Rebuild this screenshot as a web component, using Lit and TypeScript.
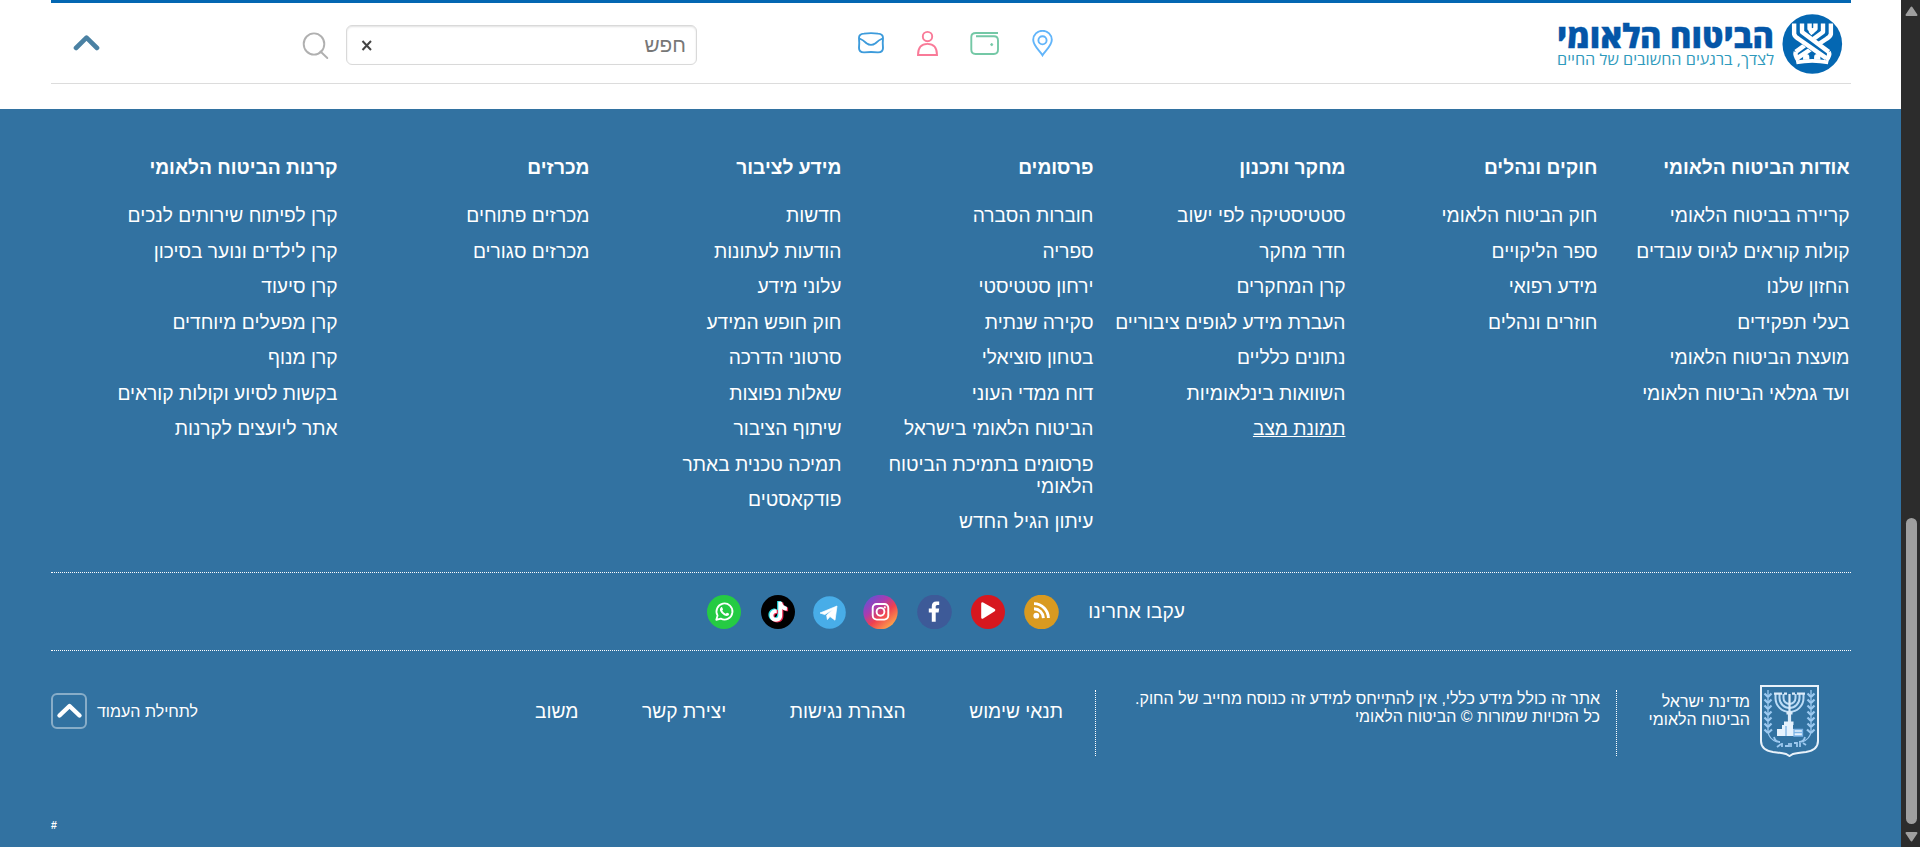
import { LitElement, html, css, svg } from 'lit';
import { customElement } from 'lit/decorators.js';
import { classMap } from 'lit/directives/class-map.js';

interface Column { title: string; links: string[]; underlined?: string; }

const COLUMNS: Column[] = [
  { title: 'אודות הביטוח הלאומי', links: ['קריירה בביטוח הלאומי', 'קולות קוראים לגיוס עובדים', 'החזון שלנו', 'בעלי תפקידים', 'מועצת הביטוח הלאומי', 'ועד גמלאי הביטוח הלאומי'] },
  { title: 'חוקים ונהלים', links: ['חוק הביטוח הלאומי', 'ספר הליקויים', 'מידע רפואי', 'חוזרים ונהלים'] },
  { title: 'מחקר ותכנון', links: ['סטטיסטיקה לפי ישוב', 'חדר מחקר', 'קרן המחקרים', 'העברת מידע לגופים ציבוריים', 'נתונים כלליים', 'השוואות בינלאומיות', 'תמונת מצב'], underlined: 'תמונת מצב' },
  { title: 'פרסומים', links: ['חוברות הסברה', 'ספריה', 'ירחון סטטיסטי', 'סקירה שנתית', 'בטחון סוציאלי', 'דוח ממדי העוני', 'הביטוח הלאומי בישראל', 'פרסומים בתמיכת הביטוח הלאומי', 'עיתון הגיל החדש'] },
  { title: 'מידע לציבור', links: ['חדשות', 'הודעות לעתונות', 'עלוני מידע', 'חוק חופש המידע', 'סרטוני הדרכה', 'שאלות נפוצות', 'שיתוף הציבור', 'תמיכה טכנית באתר', 'פודקאסטים'] },
  { title: 'מכרזים', links: ['מכרזים פתוחים', 'מכרזים סגורים'] },
  { title: 'קרנות הביטוח הלאומי', links: ['קרן לפיתוח שירותים לנכים', 'קרן לילדים ונוער בסיכון', 'קרן סיעוד', 'קרן מפעלים מיוחדים', 'קרן מנוף', 'בקשות לסיוע וקולות קוראים', 'אתר ליועצים לקרנות'] },
];

const LEGAL = ['תנאי שימוש', 'הצהרת נגישות', 'יצירת קשר', 'משוב'];

const rss = svg`<circle cx="17.5" cy="17" r="17.3" fill="#d99a20"/><circle cx="12.3" cy="20.7" r="2.9" fill="#fff"/>
  <path d="M10 13.7a9.6 9.6 0 0 1 9.4 9.4M10 8.6a14.6 14.6 0 0 1 14.4 14.5" fill="none" stroke="#fff" stroke-width="2.9"/>`;
const youtube = svg`<circle cx="17" cy="17" r="17" fill="#d7171f"/><path d="M11.5 8.5 23 15.2 11.5 22.5Z" fill="#fff" stroke="#fff" stroke-width="2.6" stroke-linejoin="round"/>`;
const facebook = svg`<circle cx="17.5" cy="17" r="17.3" fill="#3d5a98"/><path d="M14.8 26.8v-9.4h-3v-4h3v-2.1c0-3.4 1.6-4.9 4.6-4.9.9 0 2 .1 2.8.2v3.4h-1.8c-1.3 0-1.7.7-1.7 1.8v1.6h3.5l-.6 4h-2.9v9.4Z" fill="#fff"/>`;
const instagram = svg`<defs><linearGradient id="ig" x1="0.15" y1="0.1" x2="0.85" y2="0.95">
  <stop offset="0" stop-color="#6c4fd0"/><stop offset=".3" stop-color="#a93cb0"/><stop offset=".58" stop-color="#f0414f"/><stop offset="1" stop-color="#ffb04a"/></linearGradient></defs>
  <circle cx="17.5" cy="17" r="17.2" fill="url(#ig)"/><rect x="9.7" y="9" width="15.6" height="15.6" rx="4" fill="none" stroke="#fff" stroke-width="1.9"/>
  <circle cx="17.5" cy="16.8" r="3.9" fill="none" stroke="#fff" stroke-width="1.9"/><circle cx="21.8" cy="12.4" r="1.1" fill="#fff"/>`;
const telegram = svg`<circle cx="16.5" cy="16.5" r="16.3" fill="#48ade8"/><path d="M7 17 24 10 22 24.2 17 20.6 14.4 23.6 13.6 19.3 20 13.5 11.8 18.6Z" fill="#fff" stroke="#fff" stroke-width=".7" stroke-linejoin="round"/>`;
const note = 'M17.3 6.8h3.8c.2 2.9 2 4.8 4.8 5v3.7c-1.8 0-3.4-.5-4.7-1.5v6.3c0 4-2.7 6.4-6.2 6.4-3.6 0-6.4-2.6-6.4-6.2 0-3.8 3.1-6.6 7.1-6.3v3.9c-1.9-.4-3.3.7-3.3 2.3 0 1.5 1.1 2.5 2.6 2.5 1.6 0 2.3-1 2.3-2.7Z';
const tiktok = svg`<circle cx="17" cy="17" r="17" fill="#000"/><path d=${note} fill="#25d8de" transform="translate(-1.2 -.8)"/><path d=${note} fill="#f0264f" transform="translate(1.2 .8)"/><path d=${note} fill="#fff"/>`;
const whatsapp = svg`<circle cx="17" cy="17" r="17" fill="#25cb43"/><path d="M9.3 24.8 10.6 20.6a8 8 0 1 1 3.2 3Z" fill="none" stroke="#fff" stroke-width="1.8" stroke-linejoin="round"/>
  <path d="M13.9 12.4c.5-.5 1.3-.3 1.5.3l.6 1.5c.1.4-.8 1.4-.7 1.6.8 1.4 1.9 2.4 3.3 3 .3.1 1.1-1.2 1.5-1.1l1.7.8c.5.4.2 1.5-.5 2-1.1.8-2.6.5-4.2-.3a9 9 0 0 1-3.9-4.3c-.5-1.4-.2-2.7.7-3.5Z" fill="#fff"/>`;
const SOCIAL = [
  { name: 'rss', width: 35, icon: rss },
  { name: 'youtube', width: 34, icon: youtube },
  { name: 'facebook', width: 35, icon: facebook },
  { name: 'instagram', width: 35, icon: instagram },
  { name: 'telegram', width: 33, icon: telegram },
  { name: 'tiktok', width: 34, icon: tiktok },
  { name: 'whatsapp', width: 34, icon: whatsapp },
];

@customElement('site-header')
class SiteHeader extends LitElement {
  static styles = css`
    :host { display: block; height: 109px; background: #fff; }
    .bar { box-sizing: border-box; height: 84px; margin: 0 50px 0 51px; border-top: 3px solid #0467b2; border-bottom: 1px solid #dcdcdc;
      display: flex; align-items: flex-start; padding-right: 8px; }
    svg { display: block; flex: none; }
    .logo { margin-top: 11px; direction: ltr; }
    .mark { font: 800 33px "Open Sans", sans-serif; fill: #0456a8; direction: ltr; stroke: #0456a8; stroke-width: .3px; }
    .slogan { font: 400 15px "Open Sans", sans-serif; fill: #2f9abc; direction: ltr; }
    .tools { flex: none; display: flex; justify-content: space-between; width: 195px; margin: 27px 503px 0 0; }
    .field { box-sizing: border-box; flex: none; width: 351px; height: 40px; margin: 22px 161px 0 0; border: 1px solid #d9d9d9; border-radius: 6px;
      box-shadow: inset 0 1px 2px rgba(0,0,0,.12); display: flex; align-items: center; justify-content: space-between; padding: 0 10px 0 14px;
      font: 20.8px "Liberation Sans", Arial, sans-serif; color: #777; }
    .glass { margin: 29px 17px 0 0; }
    .up { margin: 31px 202px 0 0; }
  `;
  render() {
    return html`<div class="bar">
      <svg class="logo" width="287" height="62" viewBox="0 0 287 62">
        <circle cx="256.3" cy="30" r="29.8" fill="#0467b2"/>
        <g transform="translate(256.3 30) scale(1.05) translate(-256.3 -30)">
          <g fill="none" stroke-linejoin="round">
            <g stroke="#fff" stroke-width="4.2">
              <path d="M274 10.5V20.5Q273.5 23 270 25L242 43.5M266.5 10.5V18.5L240.5 37.5M259.3 10.5V15.5L254 20"/>
              <path d="M240.5 37.5Q239.5 41 243 45.5M272 37.5Q273.5 41 269.5 45.5"/>
            </g>
            <path d="M248 24.5 269 40" stroke="#0467b2" stroke-width="11"/>
            <g stroke="#fff" stroke-width="4.2"><path d="M239 10.5V20.5Q239.5 23 243 25L269.5 43.5M246.5 10.5V18.5L272 37.5M253.7 10.5V15.5L258 19"/></g>
            <path d="M241 47.5Q256.3 44.5 271.5 47.5" stroke="#fff" stroke-width="3.6"/>
          </g>
          <path d="M247.5 45v-2.5a3 3 0 0 1 6 0V45zM258 45v-2.5a3 3 0 0 1 6 0V45z" fill="#fff"/>
        </g>
        <text class="mark" x="1" y="33.5" textLength="217" lengthAdjust="spacingAndGlyphs">הביטוח הלאומי</text>
        <text class="slogan" x="1" y="51" textLength="217" lengthAdjust="spacingAndGlyphs">לצדך, ברגעים החשובים של החיים</text>
      </svg>
      <div class="tools">
        <svg width="21" height="27" viewBox="0 0 21 27" fill="none" stroke="#62b5fa" stroke-width="1.9"><path d="M10.5 25.3C8 21 1.2 16 1.2 9.8a9.3 9 0 0 1 18.6 0C19.8 16 13 21 10.5 25.3Z"/><circle cx="10.5" cy="10.3" r="4.1"/></svg>
        <svg width="29" height="25" viewBox="0 0 29 25" fill="none" stroke="#74c8a6" stroke-width="1.9"><path d="M28 3H6Q1.3 3 1.3 7v12.5Q1.3 24 5.5 24h18.3Q28 24 28 19.5v-9Q28 6.3 24 6.3H6"/><circle cx="21.7" cy="14.6" r="1" fill="#74c8a6" stroke-width="1"/></svg>
        <svg width="21" height="27" viewBox="0 0 21 27" fill="none" stroke="#f97a98" stroke-width="1.9"><circle cx="10.5" cy="6.6" r="4.7"/><path d="M1 25C1 17.7 4 13.9 10.5 13.9S20 17.7 20 25Z"/></svg>
        <svg width="26" height="25" viewBox="0 0 26 25" fill="none" stroke="#3d9bdb" stroke-width="1.9"><path d="M6 3.6Q13 2.6 20 3.6 25 3.7 25 8q-.5 5 0 10 0 4.3-5 4.4-7-.7-14 0-5-.1-5-4.4.5-5 0-10Q1 3.7 6 3.6ZM1.5 8.5Q5 10 8.5 13.2 13 16.5 17.5 13.2 21 10 24.5 8.5"/></svg>
      </div>
      <div class="field"><span>חפש</span><svg width="12" height="12" viewBox="0 0 12 12" stroke="#444" stroke-width="2"><path d="m1.5 2 8.5 9M10 2 1.5 11"/></svg></div>
      <svg class="glass" width="27" height="28" viewBox="0 0 27 28" fill="none" stroke="#b0b0b0" stroke-width="1.9" stroke-linecap="round"><ellipse cx="12" cy="12" rx="10.3" ry="10.6"/><path d="m18.5 19.5 6.8 6.5"/></svg>
      <svg class="up" width="27" height="17" viewBox="0 0 27 17" fill="none" stroke="#4a81a3" stroke-width="4.6" stroke-linecap="round" stroke-linejoin="round"><path d="M3 14 13.5 3.7 24 14"/></svg>
    </div>`;
  }
}

@customElement('site-footer')
class SiteFooter extends LitElement {
  static styles = css`
    :host { display: block; box-sizing: border-box; height: 738px; padding: 48px 50px 0 51px; background: #3272a1; color: #fff; font: 19.2px/22px "Liberation Sans", Arial, sans-serif; }
    svg { display: block; flex: none; }
    .columns { display: grid; grid-template-columns: repeat(7, 252px); height: 415px; padding-right: 1.5px; width: 1798px; box-sizing: border-box; }
    .column { box-sizing: border-box; width: 252px; padding-left: 44px; }
    .title { font-size: 19.2px; font-weight: 700; margin: 0 0 26.45px; line-height: 22px; white-space: nowrap; }
    .link { margin-bottom: 13.45px; }
    .link.short { white-space: nowrap; }
    .underlined { text-decoration: underline; }
    .social { box-sizing: border-box; height: 79px; border: dotted #fff; border-width: 1px 0; display: flex; align-items: center; padding-right: 666px; padding-top: 1px; }
    .follow { margin-left: 29px; }
    .icons { display: flex; align-items: center; gap: 19px; }
    .telegram { margin-right: -2px; }
    .tiktok { margin-right: -1px; }
    .whatsapp { margin-right: 1px; }
    .bottom { display: flex; align-items: flex-start; padding-top: 34px; font-size: 16px; line-height: 18px; }
    .emblem { margin-right: 32px; }
    .state { margin: 8px 10px 0 0; width: 133px; }
    .about { box-sizing: border-box; width: 522px; height: 66px; margin-top: 5px; padding-right: 16px; border: dotted #fff; border-width: 0 1px; white-space: nowrap; }
    .legal { display: flex; gap: 63.5px; margin: 16px 32px 0 0; font-size: 19.2px; line-height: 22px; white-space: nowrap; }
    .top { flex: none; display: flex; align-items: center; gap: 10px; margin-top: 8px; margin-right: auto; }
    .label { padding-top: 2px; }
    .box { box-sizing: border-box; width: 36px; height: 36px; border: 2px solid rgba(255,255,255,.42); border-radius: 6px; display: grid; place-items: center; }
    .hash { text-align: left; font-size: 10.5px; line-height: 12px; font-weight: 700; margin-top: 62px; }
  `;
  render() {
    return html`
      <div class="columns">${COLUMNS.map(c => html`<div class="column"><h3 class="title">${c.title}</h3>
        ${c.links.map(l => html`<div class=${classMap({ link: true, short: c.title !== 'פרסומים', underlined: l === c.underlined })}>${l}</div>`)}</div>`)}</div>
      <div class="social"><span class="follow">עקבו אחרינו</span>
        <div class="icons">${SOCIAL.map(s => html`<svg class=${s.name} width=${s.width} height=${s.name === 'telegram' ? 33 : 34}>${s.icon}</svg>`)}</div></div>
      <div class="bottom">
        <svg class="emblem" width="59" height="72" viewBox="0 0 59 72" fill="none" stroke="#dcebf9">
          <path d="M1 1h57v55q0 9-12 11-9 1-13 2L29.5 71 26 69Q22 68 13 67 1 65 1 56Z" stroke="#e9f2fa" stroke-width="2"/>
          <g stroke="#9cc9f0" stroke-width="2.2"><path d="M8 5v42q1 7 9 10M51 5v42q-1 7-9 10" stroke-width="1.3"/>
            <path d="M8 12 4.5 8.5M8 18l-3.5-3.5M8 24l-3.5-3.5M8 30l-3.5-3.5M8 36l-3.5-3.5M8 42l-3.5-3.5M8 48l-3.5-3.5M8 12l3.5-3.5M8 18l3.5-3.5M8 24l3.5-3.5M8 30l3.5-3.5M8 36l3.5-3.5M8 42l3.5-3.5M8 48l4-3.5"/>
            <path d="M51 12 47.5 8.5M51 18l-3.5-3.5M51 24l-3.5-3.5M51 30l-3.5-3.5M51 36l-3.5-3.5M51 42l-3.5-3.5M51 48l-4-3.5M51 12l3.5-3.5M51 18l3.5-3.5M51 24l3.5-3.5M51 30l3.5-3.5M51 36l3.5-3.5M51 42l3.5-3.5M51 48l3.5-3.5"/></g>
          <g stroke="#bcdcf6" stroke-width="2"><path d="M15.5 9v4a14 14 0 0 0 28 0V9M19.5 9v4a10 10 0 0 0 20 0V9M23.5 9v4a6 6 0 0 0 12 0V9"/></g>
          <path d="M14 8.7h8M24 8.7h3M32 8.7h3M37 8.7h8M29.5 9v20" stroke-width="2.2"/>
          <path d="M26.5 28h6M29.5 28v9" stroke-width="3.2"/><path d="M22 40h11v4h9v7H17v-7h5Z" fill="#e6f2fd" stroke="none"/>
          <path d="M24 36.5h9.5V40H24z" fill="#e6f2fd" stroke="none"/>
          <path d="M34 44.5h8.5V51H34zM34 47.5h8M26 41v10" stroke="#7db4e6" stroke-width="1.3"/>
          <path d="M14 52q1 5 6 5M45 52q-1 5-6 5M17 62l4-3M22 62v-4M25 61h4v-3M31 58v4M34 58h3v4M40 58v4M43 58l3 2" stroke="#9cc8ee" stroke-width="1.8"/>
        </svg>
        <div class="state">מדינת ישראל<br>הביטוח הלאומי</div>
        <div class="about">אתר זה כולל מידע כללי, אין להתייחס למידע זה כנוסח מחייב של החוק.<br>כל הזכויות שמורות © הביטוח הלאומי</div>
        <div class="legal">${LEGAL.map(l => html`<span>${l}</span>`)}</div>
        <div class="top"><span class="label">לתחילת העמוד</span><span class="box"><svg width="28" height="20" viewBox="0 0 28 20" fill="none" stroke="#fff" stroke-width="4.4" stroke-linecap="round" stroke-linejoin="round"><path d="M4.5 14.5 14.5 5l10 9.5"/></svg></span></div>
      </div>
      <div class="hash">#</div>`;
  }
}

@customElement('app-root')
class AppRoot extends LitElement {
  static styles = css`
    :host { display: flex; direction: ltr; height: 847px; overflow: hidden; }
    .page { width: 1901px; direction: rtl; }
    .scroll { box-sizing: border-box; width: 19px; background: #2c2c2c; display: flex; flex-direction: column; align-items: center; padding: 6px 0 5px 1px; }
    .thumb { width: 11px; height: 306px; border-radius: 6px; background: #9f9f9f; margin: 502px 0 auto; }
    svg { display: block; }
  `;
  render() {
    return html`<div class="page"><site-header></site-header><site-footer></site-footer></div>
      <div class="scroll">
        <svg width="13" height="10" viewBox="0 0 13 10"><path d="M6.5 1.5 11.5 9h-10Z" fill="#9f9f9f" stroke="#9f9f9f" stroke-width="2" stroke-linejoin="round"/></svg>
        <div class="thumb"></div>
        <svg width="13" height="10" viewBox="0 0 13 10"><path d="M6.5 8.5 11.5 1h-10Z" fill="#9f9f9f" stroke="#9f9f9f" stroke-width="2" stroke-linejoin="round"/></svg>
      </div>`;
  }
}
